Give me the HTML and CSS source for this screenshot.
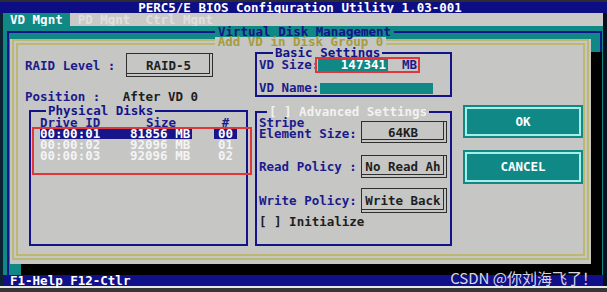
FILE: index.html
```html
<!DOCTYPE html>
<html lang="en">
<head>
    <meta charset="UTF-8">
    <meta name="viewport" content="width=device-width, initial-scale=1.0">
    <title>PERC5/E BIOS Configuration Utility</title>
    <link rel="stylesheet" href="styles.css">
</head>
<body>
    <div class="screen">
        <header class="titlebar">PERC5/E BIOS Configuration Utility 1.03-001</header>
        <div class="main">
            <nav class="tabs">
                <span class="tab active">VD Mgnt</span>
                <span class="tab">PD Mgnt</span>
                <span class="tab">Ctrl Mgnt</span>
            </nav>
            <div class="desk">
                <fieldset class="vd-frame">
                    <legend>Virtual Disk Management</legend>
                    <div class="window">
                        <div class="dialog">
                            <div class="dialog-title">Add VD in Disk Group 0</div>
                            <div class="dialog-body">

                                <div class="col col-left">
                                    <div class="raid-row">
                                        <span class="label raid-label">RAID Level :</span>
                                        <span class="pick raid">RAID-5</span>
                                    </div>
                                    <div class="position"><span class="label">Position :</span>   <span class="value">After VD 0</span></div>
                                    <fieldset class="group disks">
                                        <legend>Physical Disks</legend>
                                        <div class="disk-head">
                                            <span>Drive ID</span>
                                            <span class="center">Size</span>
                                            <span></span>
                                            <span class="center">#</span>
                                        </div>
                                        <div class="disk-list">
                                            <div class="disk selected">
                                                <span class="cell">00:00:01</span>
                                                <span class="cell">81856 MB</span>
                                                <span></span>
                                                <span class="cell center">00</span>
                                            </div>
                                            <div class="disk">
                                                <span>00:00:02</span>
                                                <span>92096 MB</span>
                                                <span></span>
                                                <span class="center">01</span>
                                            </div>
                                            <div class="disk">
                                                <span>00:00:03</span>
                                                <span>92096 MB</span>
                                                <span></span>
                                                <span class="center">02</span>
                                            </div>
                                        </div>
                                    </fieldset>
                                </div>

                                <div class="col col-mid">
                                    <fieldset class="group basic">
                                        <legend>Basic Settings</legend>
                                        <div class="field-row">
                                            <span class="label size-label">VD Size:</span>
                                            <span class="size-mark">
                                                <span class="field size-field">147341</span>
                                                <span class="unit">MB</span>
                                            </span>
                                        </div>
                                        <div class="field-row name-row">
                                            <span class="label name-label">VD Name:</span>
                                            <span class="field name-field"></span>
                                        </div>
                                    </fieldset>
                                    <fieldset class="group advanced">
                                        <legend>[ ] Advanced Settings</legend>
                                        <div class="opt-row stripe">
                                            <span class="label opt-label">Stripe<br>Element Size:</span>
                                            <span class="pick">64KB</span>
                                        </div>
                                        <div class="opt-row read">
                                            <span class="label opt-label">Read Policy :</span>
                                            <span class="pick">No Read Ah</span>
                                        </div>
                                        <div class="opt-row write">
                                            <span class="label opt-label">Write Policy:</span>
                                            <span class="pick">Write Back</span>
                                        </div>
                                        <div class="init">[ ] Initialize</div>
                                    </fieldset>
                                </div>

                                <div class="col col-right">
                                    <div class="btn ok">OK</div>
                                    <div class="btn cancel">CANCEL</div>
                                </div>
                            </div>
                        </div>
                    </div>
                </fieldset>
            </div>
            <footer class="statusbar">F1-Help F12-Ctlr<span class="watermark">CSDN @你刘海飞了！</span></footer>
        </div>
        <div class="edge"></div>
    </div>
</body>
</html>
```

FILE: styles.css
```css
:root {
    --navy: #13138a;
    --ink: #1b1b8c;
    --teal: #108886;
    --gray: #c6c6c4;
    --khaki: #bcb872;
    --dark: #1e1e1e;
    --btn-line: #a8eee8;
}
body {
    margin: 0;
    background: #333;
    font-family: "DejaVu Sans Mono", "Liberation Mono", monospace;
    font-weight: bold;
    font-size: 12.5px;
}
.screen {
    width: 607px;
    height: 292px;
    background: #353535;
    display: flex;
    flex-direction: column;
    overflow: hidden;
}
.titlebar {
    height: 11px;
    line-height: 11px;
    border-top: 2px solid #2c2c34;
    background: #0e0e84;
    color: #fff;
    text-align: center;
    padding-right: 7px;
    white-space: pre;
}
.main {
    display: flex;
    flex-direction: column;
    height: 273px;
    border-left: 3px solid #0b2232;
    border-right: 4px solid #0a0f1e;
}
.tabs {
    height: 13px;
    line-height: 13px;
    background: #c9c9c7;
    display: flex;
    gap: 1px;
}
.tab {
    padding: 0 7px;
    color: #e0e0de;
}
.tab.active {
    background: var(--teal);
    color: #fff;
}
.desk {
    height: 249px;
    flex: none;
    background: var(--teal);
    display: flex;
    flex-direction: column;
    padding: 0 1px 0 4px;
}
fieldset {
    margin: 0;
    padding: 0;
    min-width: 0;
}
legend {
    padding: 0 2px;
    white-space: pre;
}
.vd-frame {
    flex: 1;
    border: 2px solid var(--navy);
    border-bottom: 0;
}
.vd-frame > legend {
    margin: 0 auto;
    line-height: 12px;
    color: var(--navy);
    padding: 0 3px;
}
.window {
    width: 577px;
    height: 223px;
    margin: -1px 0 0 1px;
    padding: 0 2px 2px 2px;
    background: var(--gray);
    box-shadow: 11px 13px 0 #000;
}
.dialog {
    height: 221px;
    box-sizing: border-box;
    margin-top: 2px;
    border: 6px double var(--khaki);
}
.dialog-title {
    width: fit-content;
    margin: -8px auto 0;
    padding: 0 3px;
    line-height: 10px;
    height: 10px;
    background: var(--gray);
    color: #a59d3c;
    white-space: pre;
}
.dialog-body {
    display: flex;
    height: 207px;
    box-sizing: border-box;
    padding-bottom: 8px;
}
.col {
    display: flex;
    flex-direction: column;
}
.col-left {
    width: 230px;
}
.col-mid {
    width: 197px;
    margin-left: 7px;
}
.col-right {
    width: 120px;
    margin-left: 11px;
}
.label {
    color: var(--ink);
    white-space: pre;
}
.raid-row {
    display: flex;
    align-items: center;
    margin-top: 6px;
    padding-left: 7px;
    height: 24px;
}
.raid-label {
    width: 101px;
}
.pick {
    box-sizing: border-box;
    width: 86px;
    height: 23px;
    display: flex;
    align-items: center;
    justify-content: center;
    padding-right: 2px;
    color: var(--dark);
    border: 1px solid #2e2e2e;
    box-shadow: inset -2px -2px 0 var(--gray), inset -3px -3px 0 #2e2e2e;
    white-space: pre;
}
.pick.raid {
    width: 87px;
    height: 24px;
}
.position {
    margin-top: 14px;
    padding-left: 7px;
    line-height: 12px;
    white-space: pre;
}
.position .value {
    color: var(--dark);
}
.group {
    border: 2px solid var(--navy);
}
.group > legend {
    line-height: 12px;
    color: var(--navy);
}
.disks {
    flex: 1;
    margin: 2px 0 0 11px;
    width: 219px;
    box-sizing: border-box;
}
.disks > legend {
    margin-left: 15px;
}
.disk-head,
.disk {
    display: grid;
    grid-template-columns: 90px 62px 22px 23px;
    line-height: 11px;
    white-space: pre;
}
.disk-head {
    padding-left: 9px;
    color: var(--ink);
}
.center {
    text-align: center;
}
.disk-list {
    height: 46px;
    margin: 0 -5px 0 2px;
    padding-left: 7px;
    outline: 2px solid #e0373b;
    outline-offset: -1px;
}
.disk {
    color: #f4f4f4;
}
.disk.selected .cell {
    background: #16168a;
    color: #fff;
}
.basic {
    height: 50px;
    box-sizing: border-box;
    padding-left: 2px;
}
.basic > legend {
    margin-left: 14px;
}
.field-row {
    display: flex;
    align-items: center;
    line-height: 12px;
}
.size-label {
    width: 58px;
}
.size-mark {
    display: flex;
    align-items: center;
    height: 12px;
    padding-right: 1px;
    outline: 2px solid #e0373b;
}
.field {
    background: var(--teal);
    color: #fff;
    height: 12px;
}
.size-field {
    width: 68px;
    margin-left: 1px;
    padding-right: 2px;
    text-align: right;
}
.unit {
    margin-left: 14px;
    color: var(--ink);
}
.name-row {
    margin-top: 11px;
}
.name-label {
    width: 61px;
}
.name-field {
    width: 113px;
    height: 11px;
}
.advanced {
    flex: 1;
    margin-top: 9px;
    padding-left: 2px;
}
.advanced > legend {
    margin-left: 8px;
    color: #f2f2f0;
}
.opt-row {
    display: flex;
    align-items: center;
}
.opt-label {
    width: 102px;
    line-height: 12px;
}
.opt-row.stripe {
    align-items: flex-start;
}
.opt-row.stripe .opt-label {
    line-height: 10.5px;
}
.opt-row.stripe .pick {
    margin-top: 3px;
    height: 22px;
}
.opt-row.read {
    margin-top: 12px;
}
.opt-row.write {
    margin-top: 10px;
}
.opt-row.write .pick {
    height: 25px;
}
.init {
    margin-top: 3px;
    line-height: 12px;
    color: var(--dark);
    white-space: pre;
}
.btn {
    background: var(--teal);
    color: #fff;
    text-align: center;
    outline: 2px solid var(--btn-line);
    outline-offset: -4px;
}
.btn.ok {
    margin-top: 58px;
    height: 33px;
    line-height: 33px;
}
.btn.cancel {
    margin-top: 12px;
    height: 34px;
    line-height: 34px;
}
.statusbar {
    position: relative;
    flex: none;
    height: 11px;
    line-height: 11px;
    padding-left: 7px;
    background: #10108a;
    color: #fff;
    white-space: pre;
}
.watermark {
    position: absolute;
    right: 6px;
    bottom: 0;
    font-family: "Noto Sans CJK SC", "Noto Sans", sans-serif;
    font-weight: normal;
    font-size: 15px;
    line-height: 16px;
    color: rgba(236, 236, 246, 0.92);
}
.edge {
    height: 2px;
    flex: none;
    background: #e6e6e6;
}
```
